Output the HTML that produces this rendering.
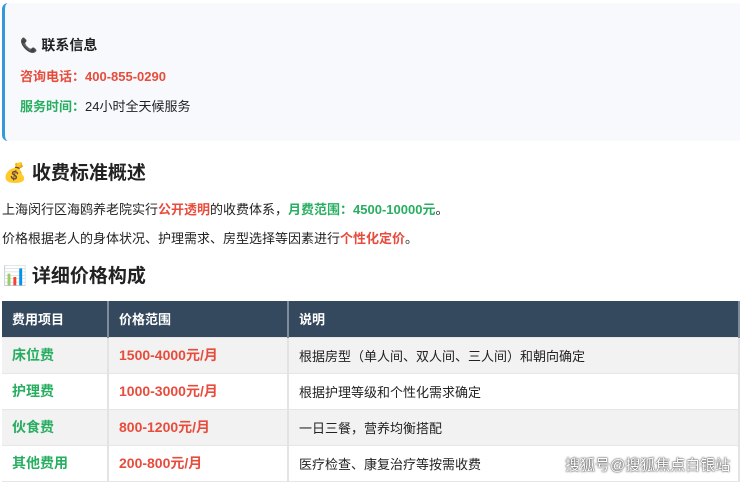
<!DOCTYPE html>
<html><head><meta charset="utf-8"><style>
*{margin:0;padding:0;box-sizing:border-box}
body{width:740px;height:481px;overflow:hidden;background:#fff;font-family:"Liberation Sans","Noto Sans CJK SC",sans-serif;color:#222;position:relative}
.card{position:absolute;left:2px;top:3px;width:740px;height:138px;background:#f7f9fc;border-left:3px solid #3498db;border-radius:6px}
.abs{position:absolute;white-space:nowrap}
.red{color:#e74c3c;font-weight:bold}
.green{color:#27ae60;font-weight:bold}
table{position:absolute;left:2px;top:301px;width:738px;border-collapse:collapse;font-size:13px}
td,th{height:36px;padding:0 0 0 10px;text-align:left;border-right:2px solid #e3e3e3;border-bottom:1px solid #e6e6e6}
td.big{font-size:14px}
th{background:#34495e;color:#fff;font-weight:bold;border-right:2px solid #7f8c9a}
tr:nth-child(even) td{background:#f2f2f2}
</style></head><body>
<div class="card"></div>
<div class="abs" style="left:20px;top:35px;font-size:14px;font-weight:bold">📞 联系信息</div>
<div class="abs" style="left:20px;top:66px;font-size:13px"><span class="red">咨询电话：400-855-0290</span></div>
<div class="abs" style="left:20px;top:96px;font-size:13px"><span class="green">服务时间：</span>24小时全天候服务</div>
<div class="abs" style="left:3px;top:158px;font-size:19px;font-weight:bold">💰 收费标准概述</div>
<div class="abs" style="left:2px;top:199px;font-size:13px">上海闵行区海鸥养老院实行<span class="red">公开透明</span>的收费体系，<span class="green">月费范围：4500-10000元</span>。</div>
<div class="abs" style="left:2px;top:228px;font-size:13px">价格根据老人的身体状况、护理需求、房型选择等因素进行<span class="red">个性化定价</span>。</div>
<div class="abs" style="left:3px;top:261px;font-size:19px;font-weight:bold">📊 详细价格构成</div>
<table>
<tr><th style="width:106px">费用项目</th><th style="width:180px">价格范围</th><th>说明</th></tr>
<tr><td class="green big">床位费</td><td class="red big">1500-4000元/月</td><td>根据房型（单人间、双人间、三人间）和朝向确定</td></tr>
<tr><td class="green big">护理费</td><td class="red big">1000-3000元/月</td><td>根据护理等级和个性化需求确定</td></tr>
<tr><td class="green big">伙食费</td><td class="red big">800-1200元/月</td><td>一日三餐，营养均衡搭配</td></tr>
<tr><td class="green big">其他费用</td><td class="red big">200-800元/月</td><td>医疗检查、康复治疗等按需收费</td></tr>
</table>
<div class="abs" style="left:565px;top:454px;font-size:15px;color:#fff;text-shadow:0 0 2px #444,0 0 1px #222">搜狐号@搜狐焦点白银站</div>
</body></html>
